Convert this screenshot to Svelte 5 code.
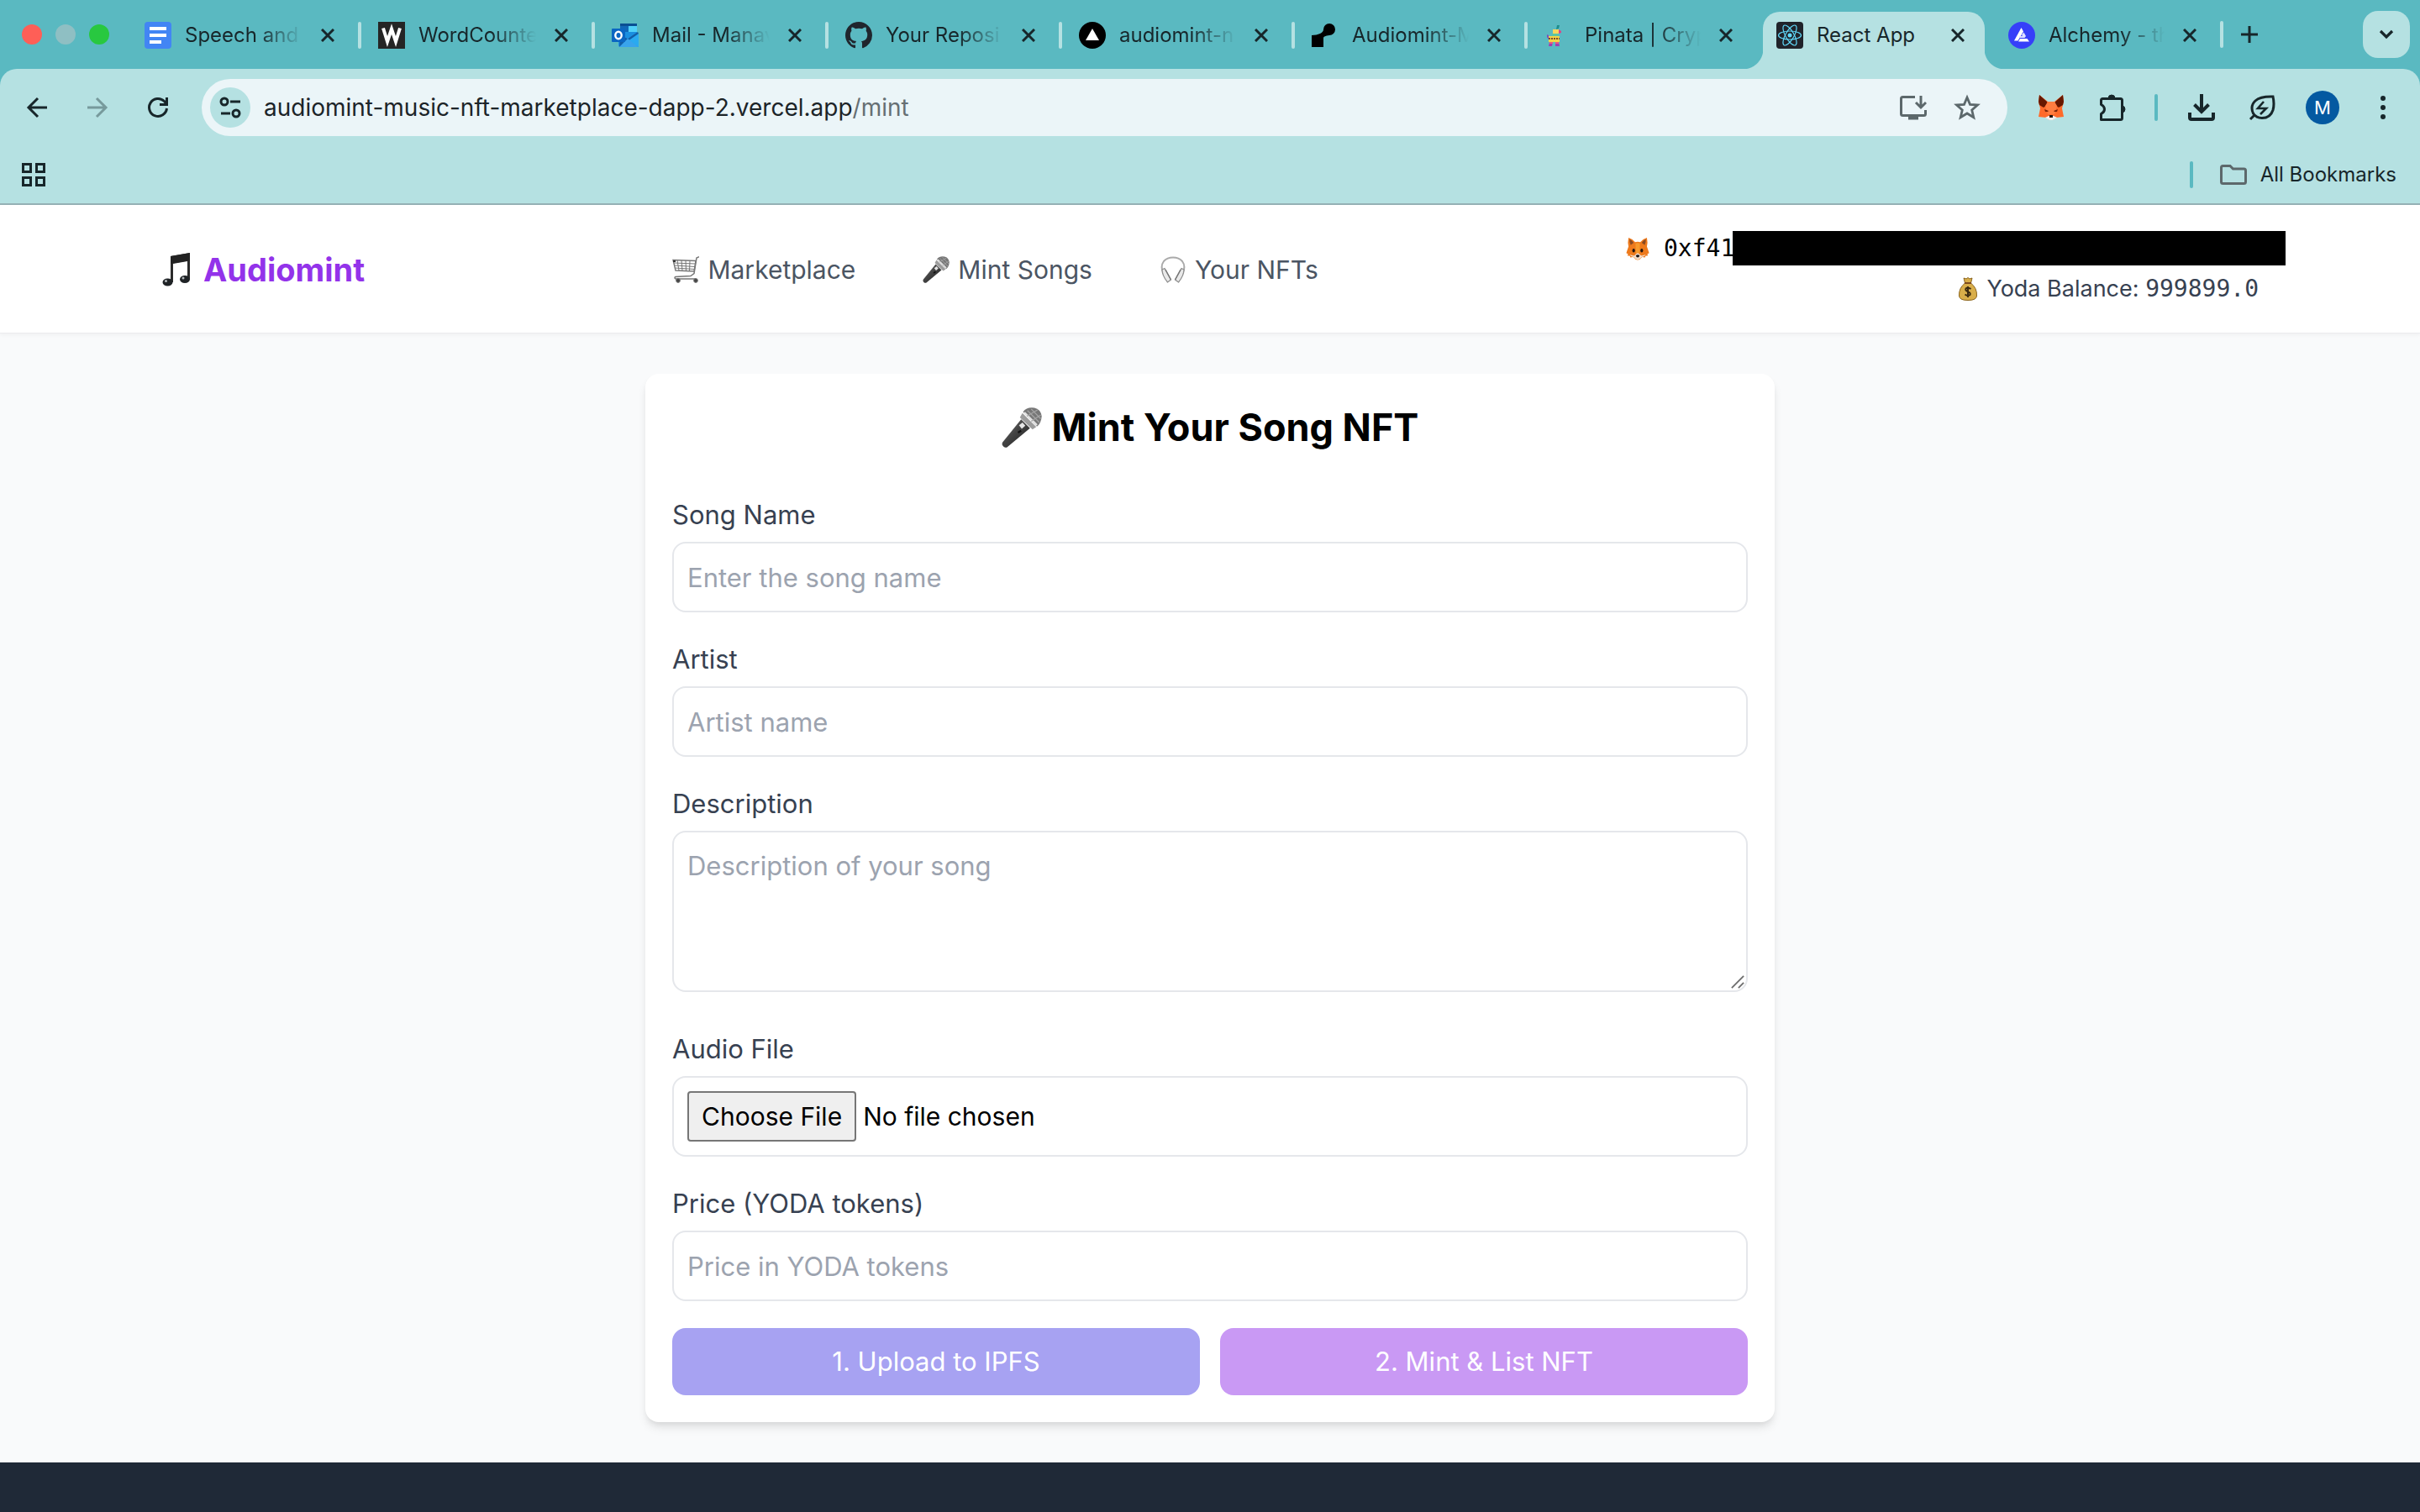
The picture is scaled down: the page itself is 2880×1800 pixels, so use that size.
<script>
  const tabs = [
    { title: 'Speech and', icon: 'docs' },
    { title: 'WordCounte', icon: 'word' },
    { title: 'Mail - Manav', icon: 'mail' },
    { title: 'Your Reposi', icon: 'github' },
    { title: 'audiomint-n', icon: 'vercel' },
    { title: 'Audiomint-M', icon: 'render' },
    { title: 'Pinata | Cryp', icon: 'pinata' },
    { title: 'React App', icon: 'react', active: true },
    { title: 'Alchemy - th', icon: 'alchemy' }
  ];

  let songName = $state('');
  let artist = $state('');
  let description = $state('');
  let price = $state('');
</script>

{#snippet mic(cls)}
  <svg class={cls} viewBox="0 0 32 32" aria-hidden="true">
    <defs>
      <linearGradient id="mic-body" x1="0" y1="0" x2="1" y2="1">
        <stop offset="0" stop-color="#777" />
        <stop offset=".45" stop-color="#444" />
        <stop offset="1" stop-color="#1d1d1d" />
      </linearGradient>
    </defs>
    <path d="M15.500 9.500L22.500 16.500L4.500 31.500Q3 32.400 1.400 31L.8 30.200Q0 29 .9 27.500Z" fill="url(#mic-body)" />
    <path d="M17 3.500Q20-.5 26 .4Q31 1.500 31.800 7Q31.500 12.500 28 15.200Z" fill="#777" />
    <path d="M16.500 4.500L27.500 15.500L24.500 17.500L14.500 8Z" fill="#9c9c9c" />
    <path d="M18 4L28 14" stroke="#e2e2e2" stroke-width="1.600" />
    <path d="M20.500 2.500L30 12M23.500 1.200L31 9M28.500 2L20 7M31 6L23.500 11" stroke="#a6a6a6" stroke-width=".8" fill="none" />
    <path d="M13.800 14.200L16.600 12L18.800 14.500L16 17Z" fill="#e6e6e6" />
    <path d="M13 20L15.500 18.500" stroke="#111" stroke-width="1.500" />
  </svg>
{/snippet}

{#snippet fox(cls)}
  <svg class={cls} viewBox="0 0 32 32" aria-hidden="true">
    <path d="M3.500 1Q9 2.500 12.500 7Q16 6 19.500 7Q23 2.500 28.500 1Q30 8 28.500 13Q30 17 31.500 22L29 23.500L30 25.500L26.500 26L26 28L22 27.500Q19 31.500 16 31.500Q13 31.500 10 27.500L6 28L5.500 26L2 25.500L3 23.500L.5 22Q2 17 3.500 13Q2 8 3.500 1Z" fill="#ee7a1c" />
    <path d="M5 3Q8.500 4.500 10.500 8L6.500 11Q4.500 7 5 3ZM27 3Q23.500 4.500 21.500 8L25.500 11Q27.500 7 27 3Z" fill="#8a4a22" />
    <path d="M13 9Q16 7.500 19 9L18.500 22H13.500Z" fill="#f79a2c" />
    <path d="M5 24Q9 26 12 25Q14 22 16 22Q18 22 20 25Q23 26 27 24Q25 27.500 21.500 27.500Q19 31 16 31Q13 31 10.500 27.500Q7 27.500 5 24Z" fill="#f3dcc8" />
    <ellipse cx="10.500" cy="18.500" rx="1.800" ry="2.600" fill="#241610" />
    <ellipse cx="21.500" cy="18.500" rx="1.800" ry="2.600" fill="#241610" />
    <path d="M13.500 25Q16 23.500 18.500 25Q18 28 16 28Q14 28 13.500 25Z" fill="#1a1413" />
  </svg>
{/snippet}

{#snippet favicon(name)}
  <svg class="favicon" viewBox="0 0 32 32" aria-hidden="true">
    {#if name === 'docs'}
      <rect width="32" height="32" rx="4" fill="#4285f4" />
      <path d="M6 8H26M6 16H26M6 24H20" stroke="#fff" stroke-width="4" />
    {:else if name === 'word'}
      <rect width="32" height="32" fill="#252525" />
      <path d="M6 7.500L11 23.500L16 8.500L21 23.500L26 7.500" fill="none" stroke="#fff" stroke-width="4" />
    {:else if name === 'mail'}
      <path d="M10 2H30V20H10Z" fill="#1a8fe0" />
      <path d="M10 2H30V5H10Z" fill="#0a4f93" />
      <path d="M20 5H30V12H20Z" fill="#50d0f8" />
      <path d="M10 5H20V12H10Z" fill="#1068b8" />
      <path d="M8 14L20 20L32 14V30H10Q8 30 8 28Z" fill="#1f8fe0" />
      <path d="M32 14V30L17 20Z" fill="#2aaaf0" />
      <path d="M9 30L32 14L31 12L19 20L10 16Z" fill="#115ea8" />
      <path d="M9 30H32L19 20Z" fill="#39a4ec" />
      <rect y="8" width="16" height="16" rx="1" fill="#0a66c2" />
      <ellipse cx="8" cy="16" rx="3.700" ry="4.200" fill="none" stroke="#fff" stroke-width="2.400" />
    {:else if name === 'github'}
      <path transform="scale(2)" fill="#20262d" d="M8 0C3.580 0 0 3.580 0 8c0 3.540 2.290 6.530 5.470 7.590.4.070.55-.17.55-.38 0-.19-.01-.82-.01-1.490-2.010.37-2.530-.49-2.690-.94-.09-.23-.48-.94-.82-1.130-.28-.15-.68-.52-.01-.53.63-.01 1.080.58 1.230.82.72 1.210 1.870.87 2.330.66.07-.52.28-.87.51-1.070-1.780-.2-3.640-.89-3.640-3.950 0-.87.31-1.590.82-2.150-.08-.2-.36-1.020.08-2.120 0 0 .67-.21 2.200.82.64-.18 1.320-.27 2-.27s1.360.09 2 .27c1.530-1.040 2.200-.82 2.200-.82.44 1.100.16 1.920.08 2.120.51.56.82 1.270.82 2.150 0 3.070-1.870 3.750-3.650 3.950.29.25.54.73.54 1.480 0 1.070-.01 1.930-.01 2.200 0 .21.15.46.55.38A8.010 8.010 0 0 0 16 8c0-4.420-3.580-8-8-8z" />
    {:else if name === 'vercel'}
      <circle cx="16" cy="16" r="16" />
      <path d="M16 8L24 22H8Z" fill="#fff" />
    {:else if name === 'render'}
      <path d="M0 16Q6 16 10 14Q14 12 14 9A7 7 0 1 1 21 16Q14 17 14 19V30H0Z" />
    {:else if name === 'pinata'}
      <path d="M13 4L16 4L15 8L12 9Z" fill="#1d8d8c" transform="translate(2 0)" />
      <path d="M10 9H17V14H10Z" fill="#f9d65c" />
      <path d="M17 9L20 11V13L17 14Z" fill="#d8478b" />
      <path d="M9 14H16V17H9Z" fill="#5cc6a0" />
      <path d="M5 17H18V24H5Z" fill="#f4d345" />
      <path d="M5 20H18" stroke="#7b4b2b" stroke-width="2" stroke-dasharray="2 1" />
      <path d="M3 15L5 16V21L3 18Z" fill="#7e50b8" />
      <path d="M6 24H10L9 29H5ZM13 24H17L18 29H13Z" fill="#a23db0" />
      <path d="M6 24H10V26H6ZM13 24H17V26H13Z" fill="#ea5a83" />
    {:else if name === 'react'}
      <rect width="32" height="32" rx="4" fill="#20232a" />
      <g fill="none" stroke="#61dafb" stroke-width="1.200">
        <ellipse cx="16" cy="16" rx="13.500" ry="5" />
        <ellipse cx="16" cy="16" rx="13.500" ry="5" transform="rotate(60 16 16)" />
        <ellipse cx="16" cy="16" rx="13.500" ry="5" transform="rotate(120 16 16)" />
      </g>
      <circle cx="16" cy="16" r="2.500" fill="#61dafb" />
    {:else}
      <circle cx="16" cy="16" r="16" fill="#363ff9" />
      <path d="M15.500 7L18 11.500L11.500 22.500H7Z" fill="#fff" />
      <path d="M18.500 12.500L21 17L19.500 19H13Q12.500 18 13.500 17H17L16 15.500Z" fill="#dfe1ff" />
      <path d="M14 20H22.500L25 23.500H12Z" fill="#fff" />
    {/if}
  </svg>
{/snippet}

{#snippet cross()}
  <svg viewBox="0 0 16 16" aria-hidden="true"><path d="M1 1L15 15M15 1L1 15" stroke="#17262a" stroke-width="3" /></svg>
{/snippet}

<div class="page">
  <div class="browser">
    <div class="strip">
      <div class="lights"><i class="red"></i><i class="grey"></i><i class="green"></i></div>
      <div class="tabs">
        {#each tabs as tab}
          <div class="tab" class:active={tab.active}>
            {@render favicon(tab.icon)}
            <span class="title">{tab.title}</span>
            <button class="close" aria-label="Close tab">{@render cross()}</button>
          </div>
        {/each}
      </div>
      <span class="tab-end"></span>
      <button class="plain" aria-label="New tab">
        <svg width="22" height="22" viewBox="0 0 22 22"><path d="M11 1V21M1 11H21" stroke="#17262a" stroke-width="3" /></svg>
      </button>
      <button class="search-tabs" aria-label="Search tabs">
        <svg width="18" height="12" viewBox="0 0 18 12"><path d="M2 2L9 9L16 2" fill="none" stroke="#17262a" stroke-width="3.200" /></svg>
      </button>
    </div>

    <div class="toolbar">
      <div class="history">
        <button class="plain" aria-label="Back">
          <svg width="26" height="26" viewBox="0 0 26 26"><path d="M25 13H3M14 2L3 13L14 24" fill="none" stroke="#17262a" stroke-width="3" /></svg>
        </button>
        <button class="plain" aria-label="Forward">
          <svg width="26" height="26" viewBox="0 0 26 26"><path d="M1 13H23M12 2L23 13L12 24" fill="none" stroke="#779a9c" stroke-width="3" /></svg>
        </button>
        <button class="plain" aria-label="Reload">
          <svg width="26" height="26" viewBox="0 0 26 26"><path d="M23.500 14A10.500 10.500 0 1 1 20.500 5.500L23.500 9" fill="none" stroke="#17262a" stroke-width="3" /><path d="M25 1V11H15V8H22V1Z" fill="#17262a" /></svg>
        </button>
      </div>
      <div class="omnibox">
        <button class="site-info" aria-label="Site information">
          <svg width="26" height="26" viewBox="0 0 26 26" fill="none" stroke="#17262a" stroke-width="3"><circle cx="6" cy="6" r="4" /><path d="M13 6H25M2 20H13" /><circle cx="20" cy="20" r="4" /></svg>
        </button>
        <span class="url">audiomint-music-nft-marketplace-dapp-2.vercel.app<span>/mint</span></span>
        <button class="plain" aria-label="Install app">
          <svg width="32" height="30" viewBox="0 0 32 30" fill="none" stroke="#5c686b" stroke-width="3"><path d="M18 2.500H3.500Q1.500 2.500 1.500 4.500V22.500Q1.500 24.500 3.500 24.500H28.500Q30.500 24.500 30.500 22.500V18" /><path d="M25 1V14M19 9L25 15L31 9" /><path d="M10 27.500H22" stroke-width="4" /></svg>
        </button>
        <button class="plain" aria-label="Bookmark this tab">
          <svg width="32" height="32" viewBox="0 0 32 32"><path d="M16 4L19.500 12.300L28.500 13L21.700 19L23.800 27.800L16 23L8.200 27.800L10.300 19L3.500 13L12.500 12.300Z" fill="none" stroke="#5c686b" stroke-width="2.800" /></svg>
        </button>
      </div>
      <div class="actions">
        <button class="plain" aria-label="Wallet extension">
          <svg width="32" height="32" viewBox="0 0 32 32"><path d="M2 1L12 9H20L30 1L31 9L29 17L31 27L22 28L18 31H14L10 28L1 27L3 17L1 9Z" fill="#ff6a2a" /><path d="M2 1L11 9L12 12L7 16L2 13L1 9ZM30 1L21 9L20 12L25 16L30 13L31 9Z" fill="#661800" /><path d="M9 14L12 9H20L23 14L20 24H12Z" fill="#ff7d40" /><path d="M8 18L13 20L12 21H9ZM24 18L19 20L20 21H23Z" fill="#7a2408" /><path d="M9 28L13 26H19L23 28L18 31H14Z" fill="#f2efef" /><path d="M14 25H18V28H14Z" fill="#241610" /></svg>
        </button>
        <button class="plain" aria-label="Extensions">
          <svg width="34" height="34" viewBox="0 0 34 34"><path d="M3.500 8.500Q3.500 6.500 5.500 6.500H26.500Q28.500 6.500 28.500 8.500V29.500Q28.500 31.500 26.500 31.500H3.500V24.500Q7.500 22.500 7.500 19Q7.500 15.500 3.500 13.500Z" fill="none" stroke="#17262a" stroke-width="3" stroke-linejoin="round" /><path d="M12 6A4 4 0 0 1 20 6ZM28 15A4 4 0 0 1 28 23Z" fill="#17262a" stroke="#17262a" /></svg>
        </button>
        <span class="bar"></span>
        <button class="plain" aria-label="Downloads">
          <svg width="32" height="32" viewBox="0 0 32 32" fill="none" stroke="#17262a" stroke-width="4"><path d="M16 0V20M7.500 12.500L16 21L24.500 12.500M2 22V28Q2 30 4 30H28Q30 30 30 28V22" /></svg>
        </button>
        <button class="plain" aria-label="Energy saver">
          <svg width="32" height="32" viewBox="0 0 32 32" fill="none" stroke="#17262a" stroke-width="3"><path d="M29 3Q31 12 29 19Q26 28.500 16 28.500Q9 28.500 5.500 23Q1.500 14 8 8Q14 2.500 29 3ZM7 25L2 30" /><path d="M18 9L11 17H21L14 24" stroke-width="2.600" /></svg>
        </button>
        <button class="avatar" aria-label="Profile">M</button>
        <button class="plain" aria-label="Menu">
          <svg width="8" height="28" viewBox="0 0 8 28" fill="#17262a"><circle cx="4" cy="3" r="3" /><circle cx="4" cy="14" r="3" /><circle cx="4" cy="25" r="3" /></svg>
        </button>
      </div>
    </div>

    <div class="bookmarks">
      <button class="plain" aria-label="Tab groups">
        <svg width="28" height="28" viewBox="0 0 28 28" fill="none" stroke="#17262a" stroke-width="3"><path d="M1.500 1.500H10.500V10.500H1.500ZM17.500 1.500H26.500V10.500H17.500ZM1.500 17.500H10.500V26.500H1.500ZM17.500 17.500H26.500V26.500H17.500Z" /></svg>
      </button>
      <span class="bar"></span>
      <button class="plain all">
        <svg width="32" height="24" viewBox="0 0 32 24"><path d="M1.500 3.500Q1.500 1.500 3.500 1.500H12L15.500 5H28.500Q30.500 5 30.500 7V20.500Q30.500 22.500 28.500 22.500H3.500Q1.500 22.500 1.500 20.500Z" fill="none" stroke="#5c686b" stroke-width="3" /></svg>
        All Bookmarks
      </button>
    </div>
  </div>

  <header class="site-header">
    <div class="container">
      <a class="brand" href="/">
        <svg width="34" height="40" viewBox="0 0 34 40" aria-hidden="true">
          <path d="M11 4L34 0V32H31V10L14 13V35H11Z" fill="#2b2b2b" />
          <path d="M11 4L34 0V9L11 13Z" fill="#222" />
          <ellipse cx="7.500" cy="35" rx="6" ry="4.500" fill="#1f2326" />
          <ellipse cx="28" cy="31.500" rx="6" ry="4.500" fill="#1f2326" />
          <circle cx="5.500" cy="33.500" r="1.500" fill="#b4b9bc" />
          <circle cx="26" cy="30" r="1.500" fill="#b4b9bc" />
        </svg>
        Audiomint
      </a>
      <nav>
        <a href="/marketplace">
          <svg class="emoji" viewBox="0 0 32 32" aria-hidden="true" fill="none" stroke="#777">
            <path d="M32 0.800L29 2L26 20.500L22 23.500L4 24.500Q2 25.500 4 27H28" stroke-width="1.500" />
            <path d="M1 4.500L28 5.500L26 18L4 17Z" stroke-width="1.400" />
            <path d="M2 8L27.500 9M3 11L27 12.500M3.500 14L26.500 15.500M6 5L8 17M11 5L12 17.500M16 5L16.500 17.500M21 5.500L20.500 18" stroke-width="1" />
            <path d="M1 6H4" stroke="#333" stroke-width="2" />
            <circle cx="7" cy="29" r="2.400" fill="#444" /><circle cx="28" cy="29" r="2.400" fill="#444" />
          </svg>
          Marketplace
        </a>
        <a href="/mint">{@render mic('emoji')}Mint Songs</a>
        <a href="/nfts">
          <svg class="emoji" viewBox="0 0 32 32" aria-hidden="true">
            <path d="M4.500 20Q.5 12 5 6Q9 1.500 16 1.500Q23 1.500 27 6Q31.500 12 27.500 20" fill="none" stroke="#aaa" stroke-width="2" />
            <path d="M3 16L6 14.500L13.500 28L9.500 31Q3 23 3 16ZM29 16L26 14.500L18.500 28L22.500 31Q29 23 29 16Z" fill="#e9e9e9" stroke="#8c8c8c" stroke-width="1.200" />
            <path d="M7 16L13.500 28M25 16L18.500 28" stroke="#777" stroke-width="1.500" />
          </svg>
          Your NFTs
        </a>
      </nav>
      <div class="wallet">
        <div class="address">{@render fox('emoji-small')}<code>0xf41</code><span class="redacted"></span></div>
        <div class="balance">
          <svg class="emoji-small" viewBox="0 0 28 28" aria-hidden="true">
            <path d="M9 1L12 2L14 .5L16 2L19 1L17.500 7Q25 13 24.500 22Q24.500 27.500 14 27.500Q3.500 27.500 3.500 22Q3 13 10.500 7Z" fill="#d9ae4a" stroke="#8b651f" stroke-width="1" />
            <path d="M10 7H18" stroke="#7d4a1e" stroke-width="2" />
            <path d="M17.500 14Q14 11.500 11.500 13.500Q10.500 16 14 17.200Q17.500 18.500 16.500 21Q14 23 10.500 20.500M14 11V24" fill="none" stroke="#3b2a10" stroke-width="2" />
          </svg>
          <span>Yoda Balance: <code>999899.0</code></span>
        </div>
      </div>
    </div>
  </header>

  <main>
    <form class="card" onsubmit={(e) => e.preventDefault()}>
      <h1>{@render mic('emoji-large')}Mint Your Song NFT</h1>
      <div class="field">
        <label for="song">Song Name</label>
        <input id="song" type="text" placeholder="Enter the song name" bind:value={songName} />
      </div>
      <div class="field">
        <label for="artist">Artist</label>
        <input id="artist" type="text" placeholder="Artist name" bind:value={artist} />
      </div>
      <div class="field description">
        <label for="description">Description</label>
        <textarea id="description" placeholder="Description of your song" bind:value={description}></textarea>
        <svg class="grip" viewBox="0 0 18 18" aria-hidden="true"><path d="M1 17L17 1M10 17L17 10" stroke="#6b6b6b" stroke-width="2" /></svg>
      </div>
      <div class="field">
        <label for="audio">Audio File</label>
        <input id="audio" type="file" accept="audio/*" />
      </div>
      <div class="field">
        <label for="price">Price (YODA tokens)</label>
        <input id="price" type="text" placeholder="Price in YODA tokens" bind:value={price} />
      </div>
      <div class="buttons">
        <button class="upload" type="button">1. Upload to IPFS</button>
        <button class="mint" type="submit">2. Mint &amp; List NFT</button>
      </div>
    </form>
  </main>

  <footer></footer>
</div>

<style>
  :global(body) { margin: 0; }
  .page, .page * { box-sizing: border-box; }
  .page {
    min-height: 100vh;
    display: flex;
    flex-direction: column;
    background: #f9fafb;
    font-family: Inter, "Liberation Sans", sans-serif;
    font-size: 31px;
    line-height: 48px;
  }
  svg { display: block; flex: none; }
  button, input, textarea { font: inherit; margin: 0; }
  a { color: inherit; text-decoration: none; }
  .plain { border: 0; padding: 0; background: none; color: #17262a; }

  .browser { background: #5ab9c1; color: #17262a; font-size: 24px; }
  .strip { height: 82px; display: flex; align-items: center; padding: 0 12px 0 26px; }
  .lights { display: flex; gap: 16px; margin-right: 26px; }
  .lights i { width: 24px; height: 24px; border-radius: 50%; }
  .red { background: #fe5f57; }
  .grey { background: #8fbfc3; }
  .green { background: #28c840; }
  .tabs { flex: none; display: flex; align-self: stretch; }
  .tab {
    width: 278px;
    display: flex;
    align-items: center;
    gap: 16px;
    padding: 2px 36px 0 16px;
    position: relative;
  }
  .tab:nth-child(n + 5) { width: 277px; }
  .tab:nth-child(n + 7) { width: 276px; }
  .favicon { width: 32px; height: 32px; }
  .title {
    flex: 1;
    min-width: 0;
    overflow: hidden;
    white-space: nowrap;
    mask-image: linear-gradient(90deg, #000 62%, transparent);
  }
  .active .title { mask-image: none; }
  .close { width: 16px; padding: 0; border: 0; background: none; margin-left: 6px; }
  .tab + .tab::before {
    content: "";
    position: absolute;
    left: -8px;
    top: 26px;
    width: 4px;
    height: 32px;
    border-radius: 2px;
    background: #b5e1e2;
  }
  .tab.active::before, .tab.active + .tab::before { display: none; }
  .tab.active { isolation: isolate; }
  .tab.active::after {
    content: "";
    position: absolute;
    z-index: -1;
    inset: 14px 12px 0 0;
    border-radius: 20px 20px 0 0;
    background: #b5e1e2;
  }
  .tab.active .close::before, .tab.active .close::after {
    content: "";
    position: absolute;
    bottom: 0;
    width: 24px;
    height: 24px;
  }
  .tab.active .close::before { left: -24px; background: radial-gradient(circle at 0 0, transparent 24px, #b5e1e2 25px); }
  .tab.active .close::after { right: -12px; background: radial-gradient(circle at 100% 0, transparent 24px, #b5e1e2 25px); }
  .tab-end { width: 4px; height: 32px; border-radius: 2px; background: #b5e1e2; margin: 0 20px 0 -8px; }
  .search-tabs {
    width: 56px;
    height: 56px;
    margin-left: auto;
    border: 0;
    padding: 0;
    border-radius: 18px;
    background: #b5e1e2;
    display: grid;
    place-items: center;
  }

  .toolbar {
    height: 92px;
    background: #b5e1e2;
    border-radius: 20px 20px 0 0;
    display: flex;
    align-items: center;
    padding: 0 40px 0 31px;
  }
  .history { display: flex; gap: 46px; margin-right: 39px; }
  .omnibox {
    flex: 1;
    height: 68px;
    border-radius: 34px;
    background: #ebf5f8;
    display: flex;
    align-items: center;
    gap: 32px;
    padding: 0 32px 0 10px;
  }
  .site-info {
    width: 48px;
    height: 48px;
    border: 0;
    padding: 0;
    border-radius: 50%;
    background: #b5e1e2;
    display: grid;
    place-items: center;
    margin-right: -16px;
  }
  .url { flex: 1; font-size: 28px; color: #1c2428; }
  .url span { color: #666f73; }
  .actions { display: flex; align-items: center; gap: 40px; margin-left: 36px; }
  .bar { width: 4px; height: 32px; border-radius: 2px; background: #5ab9c1; }
  .actions .bar { margin: 0 -4px 0 -7px; }
  .avatar { width: 40px; height: 40px; border: 0; padding: 0; border-radius: 50%; background: #0459a1; color: #fff; font-size: 22px; line-height: 40px; margin-left: -4px; }
  .actions .avatar + .plain { margin-left: 8px; }

  .bookmarks {
    height: 70px;
    background: #b5e1e2;
    border-bottom: 2px solid #95b1b5;
    display: flex;
    align-items: center;
    padding: 0 28px 0 26px;
  }
  .bookmarks .bar { margin: 0 32px 0 auto; }
  .all { display: flex; align-items: center; gap: 16px; }

  .site-header { background: #fff; border-bottom: 1px solid #ececee; box-shadow: 0 2px 4px rgb(0 0 0 / 4%); padding: 32px 0; }
  .container {
    display: flex;
    justify-content: space-between;
    align-items: center;
    padding: 0 192px;
  }
  .brand { display: flex; align-items: center; gap: 16px; color: #9333ea; font-size: 38px; font-weight: 700; padding-top: 2px; }
  nav { display: flex; gap: 80px; color: #4b5563; font-size: 30px; padding-top: 2px; }
  nav a { display: flex; align-items: center; gap: 10px; }
  .emoji { width: 32px; height: 32px; }
  .wallet { display: flex; flex-direction: column; align-items: flex-end; gap: 8px; font-size: 27px; line-height: 40px; color: #374151; }
  .address { width: 753px; display: flex; align-items: center; gap: 17px; position: relative; color: #000; }
  .balance { display: flex; align-items: center; gap: 8px; }
  .emoji-small { width: 28px; height: 28px; }
  code { font-family: "DejaVu Sans Mono", monospace; font-size: 28px; }
  .redacted { position: absolute; left: 127px; right: -32px; top: -1px; bottom: 0; background: #000; }

  main { padding: 48px; }
  .card {
    max-width: 1344px;
    margin: 0 auto;
    padding: 32px;
    border-radius: 16px;
    background: #fff;
    box-shadow: 0 8px 12px -2px rgb(0 0 0 / 10%), 0 4px 8px -4px rgb(0 0 0 / 10%);
    display: flex;
    flex-direction: column;
    gap: 32px;
  }
  h1 {
    margin: 0 0 16px;
    display: flex;
    align-items: center;
    justify-content: center;
    gap: 12px;
    font-size: 45px;
    line-height: 64px;
    font-weight: 700;
    color: #000;
  }
  .emoji-large { width: 48px; height: 48px; }
  .field { display: flex; flex-direction: column; gap: 8px; color: #374151; }
  .description { margin-bottom: 12px; position: relative; }
  .grip { position: absolute; right: 4px; bottom: 4px; width: 16px; height: 16px; pointer-events: none; }
  input, textarea {
    display: block;
    width: 100%;
    padding: 16px;
    border: 2px solid #e5e7eb;
    border-radius: 16px;
    background: #fff;
    color: #000;
    outline: none;
  }
  input { height: 84px; }
  textarea { height: 192px; resize: vertical; }
  textarea::-webkit-resizer { display: none; }
  input::placeholder, textarea::placeholder { color: #9ca3af; opacity: 1; }
  input[type="file"] { height: 96px; font-size: 30px; }
  input::file-selector-button {
    height: 60px;
    padding: 0 15px;
    margin-right: 8px;
    border: 2px solid #767676;
    border-radius: 4px;
    background: #efefef;
    color: #000;
    font: inherit;
  }
  .buttons { display: grid; grid-template-columns: 1fr 1fr; gap: 24px; }
  .buttons button { height: 80px; padding: 0; border: 0; border-radius: 16px; color: #fff; }
  .upload { background: #a7a2f2; }
  .mint { background: #c999f4; }
  footer { flex: 1; background: #1f2937; }
</style>
